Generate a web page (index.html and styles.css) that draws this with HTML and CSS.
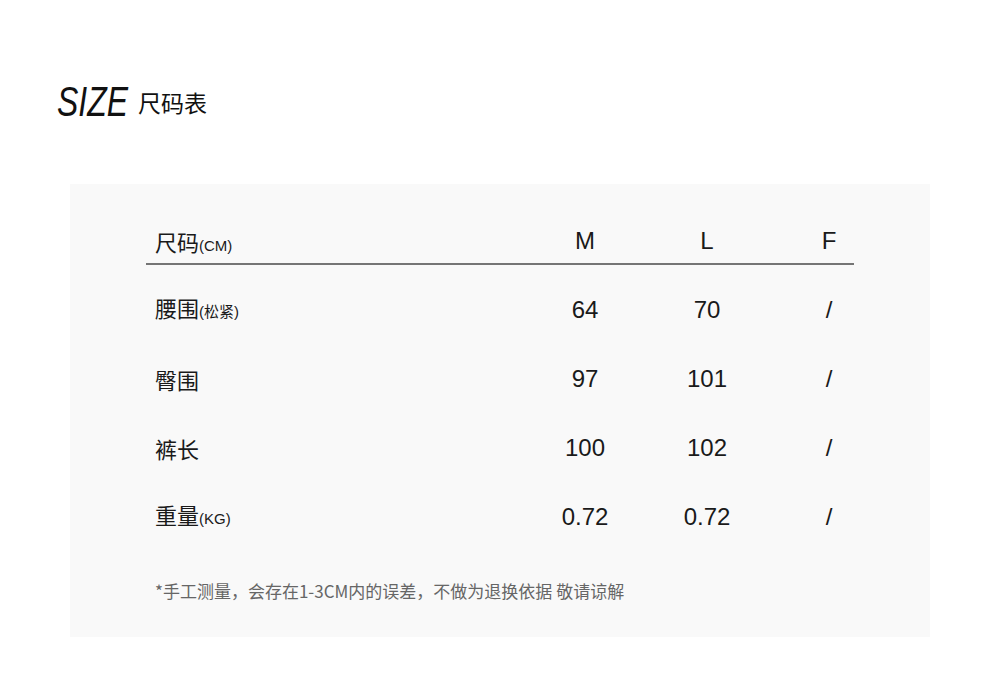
FILE: index.html
```html
<!DOCTYPE html>
<html lang="zh-CN">
<head>
<meta charset="utf-8">
<link rel="stylesheet" href="styles.css">
</head>
<body>
<div class="page">
  <h1 class="title"><span class="title-en">SIZE</span><span class="title-cn">尺码表</span></h1>
  <section class="panel">
    <div class="table">
      <div class="row head">
        <div class="label">尺码<small>(CM)</small></div>
        <div class="cell">M</div>
        <div class="cell">L</div>
        <div class="cell">F</div>
      </div>
      <div class="row">
        <div class="label">腰围<small>(松紧)</small></div>
        <div class="cell">64</div>
        <div class="cell">70</div>
        <div class="cell">/</div>
      </div>
      <div class="row">
        <div class="label">臀围</div>
        <div class="cell">97</div>
        <div class="cell">101</div>
        <div class="cell">/</div>
      </div>
      <div class="row">
        <div class="label">裤长</div>
        <div class="cell">100</div>
        <div class="cell">102</div>
        <div class="cell">/</div>
      </div>
      <div class="row">
        <div class="label">重量<small>(KG)</small></div>
        <div class="cell">0.72</div>
        <div class="cell">0.72</div>
        <div class="cell">/</div>
      </div>
    </div>
    <p class="note">*手工测量，会存在1-3CM内的误差，不做为退换依据 敬请谅解</p>
  </section>
</div>
</body>
</html>
```
FILE: styles.css
```css
* { box-sizing: border-box; }
html, body { margin: 0; padding: 0; background: #ffffff; }
body {
  font-family: "Liberation Sans", "Noto Sans CJK SC", sans-serif;
  color: #1a1a1a;
  width: 1000px;
  height: 688px;
  overflow: hidden;
}
.page {
  padding: 78px 70px 0 70px;
}
.title {
  margin: 0 0 0 -13px;
  display: flex;
  align-items: center;
  gap: 11px;
  font-weight: normal;
  line-height: 48px;
  height: 48px;
}
.title-en {
  display: inline-block;
  width: 70px;
  white-space: nowrap;
  font-family: "Liberation Sans", sans-serif;
  font-style: italic;
  font-size: 42px;
  color: #111;
  transform: scaleX(0.76);
  transform-origin: left center;
}
.title-cn {
  font-family: "Noto Sans CJK SC", sans-serif;
  font-size: 23px;
  line-height: 30px;
  color: #111;
}
.panel {
  margin-top: 58px;
  width: 860px;
  background: #f9f9f9;
  padding: 39px 76px 34px 76px;
}
.table {
  display: flex;
  flex-direction: column;
}
.row {
  display: grid;
  grid-template-columns: 1fr 50px 50px 50px;
  column-gap: 72px;
  padding: 0 0 0 9px;
  height: 69px;
  align-items: center;
}
.row.head {
  height: 42px;
  align-items: start;
  padding-top: 3px;
  border-bottom: 2px solid #757575;
  margin-bottom: 10px;
}
.label {
  font-family: "Noto Sans CJK SC", sans-serif;
  font-size: 22px;
  line-height: 30px;
  white-space: nowrap;
}
.label small {
  font-family: "Liberation Sans", "Noto Sans CJK SC", sans-serif;
  font-size: 15px;
}
.cell {
  text-align: center;
  font-size: 24px;
  line-height: 30px;
}
.note {
  margin: 28px 0 0 9px;
  font-family: "Noto Sans CJK SC", sans-serif;
  font-size: 17px;
  line-height: 24px;
  color: #666;
}
```
